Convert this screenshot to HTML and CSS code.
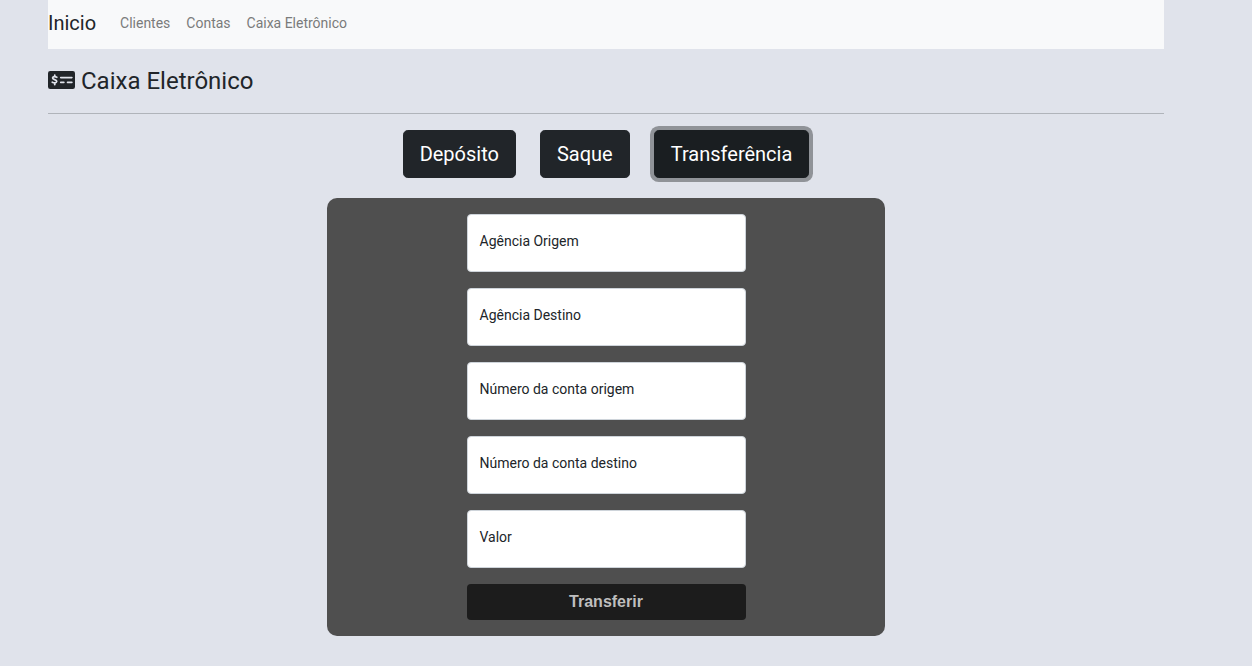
FILE: index.html
```html
<!DOCTYPE html>
<html lang="pt-BR">
<head>
<meta charset="utf-8">
<title>Caixa Eletrônico</title>
<link rel="stylesheet" href="styles.css">
</head>
<body>
<div class="container">
  <nav class="navbar">
    <a class="brand">Inicio</a>
    <a class="nav-link">Clientes</a>
    <a class="nav-link">Contas</a>
    <a class="nav-link">Caixa Eletrônico</a>
  </nav>
  <h1 class="title">
    <svg class="title-icon" viewBox="0 0 27 18" aria-hidden="true">
      <rect width="27" height="18" rx="2.2" fill="#212529"/>
      <path d="M8.8 6.2C7.8 5.7 5 5.2 4.6 6.9C4.3 9 9 8.3 8.7 10.5C8.4 12.4 5.6 11.9 4.3 11.2M6.75 4.2V5.6M6.75 12V13.5" fill="none" stroke="#e0e3eb" stroke-width="1.8" stroke-linecap="round"/>
      <path d="M12.7 6.6H23.9M12.7 11.4H15.9M19.5 11.4H23.9" fill="none" stroke="#e0e3eb" stroke-width="1.6" stroke-linecap="round"/>
    </svg>
    <span class="title-text">Caixa Eletrônico</span>
  </h1>
  <div class="actions">
    <button class="btn">Depósito</button>
    <button class="btn">Saque</button>
    <button class="btn btn-active">Transferência</button>
  </div>
  <form class="panel">
    <div class="field">Agência Origem</div>
    <div class="field">Agência Destino</div>
    <div class="field">Número da conta origem</div>
    <div class="field">Número da conta destino</div>
    <div class="field">Valor</div>
    <button class="submit" type="button">Transferir</button>
  </form>
</div>
</body>
</html>
```
FILE: styles.css
```css
* { box-sizing: border-box; }
body {
  margin: 0;
  background: #e0e3eb;
  color: #212529;
  font: 400 14px/21px Roboto, sans-serif;
}
.container { width: 1116px; margin-left: 48px; }
.navbar {
  display: flex;
  align-items: center;
  height: 49px;
  padding-bottom: 3px;
  background: #f8f9fa;
}
.brand { margin-right: 16px; font-size: 20px; line-height: 30px; }
.nav-link { padding: 0 8px; color: #7a7b7b; letter-spacing: -0.01px; }
.title {
  display: flex;
  align-items: center;
  gap: 6px;
  height: 65px;
  margin: 0 0 16px;
  padding-bottom: 2px;
  border-bottom: 1px solid #b0b4ba;
  font-size: 24px;
  font-weight: 400;
  line-height: 29px;
}
.title-icon { width: 27px; height: 18px; }
.title-text { padding-top: 2px; }
.actions { display: flex; justify-content: center; gap: 24px; }
.btn {
  height: 48px;
  padding: 0 16px;
  border: 1px solid #212529;
  border-radius: 4.8px;
  background: #212529;
  color: #fff;
  font: 400 20px/30px Roboto, sans-serif;
}
.btn-active {
  border-color: #1a1e21;
  background: #1a1e21;
  box-shadow: 0 0 0 4px #909398;
}
.panel {
  display: flex;
  flex-direction: column;
  align-items: center;
  gap: 16px;
  width: 558px;
  height: 438px;
  margin: 20px auto 0;
  padding-top: 16px;
  border-radius: 10px;
  background: #4f4f4f;
}
.field {
  width: 279px;
  height: 58px;
  padding: 16px 12px;
  border: 1px solid #ced4da;
  border-radius: 4px;
  background: #fff;
}
.submit {
  width: 279px;
  height: 36px;
  padding: 0;
  border: 0;
  border-radius: 4px;
  background: #1c1c1c;
  color: #bfbfbf;
  font: 700 16px "Liberation Sans", Arial, sans-serif;
}
```
